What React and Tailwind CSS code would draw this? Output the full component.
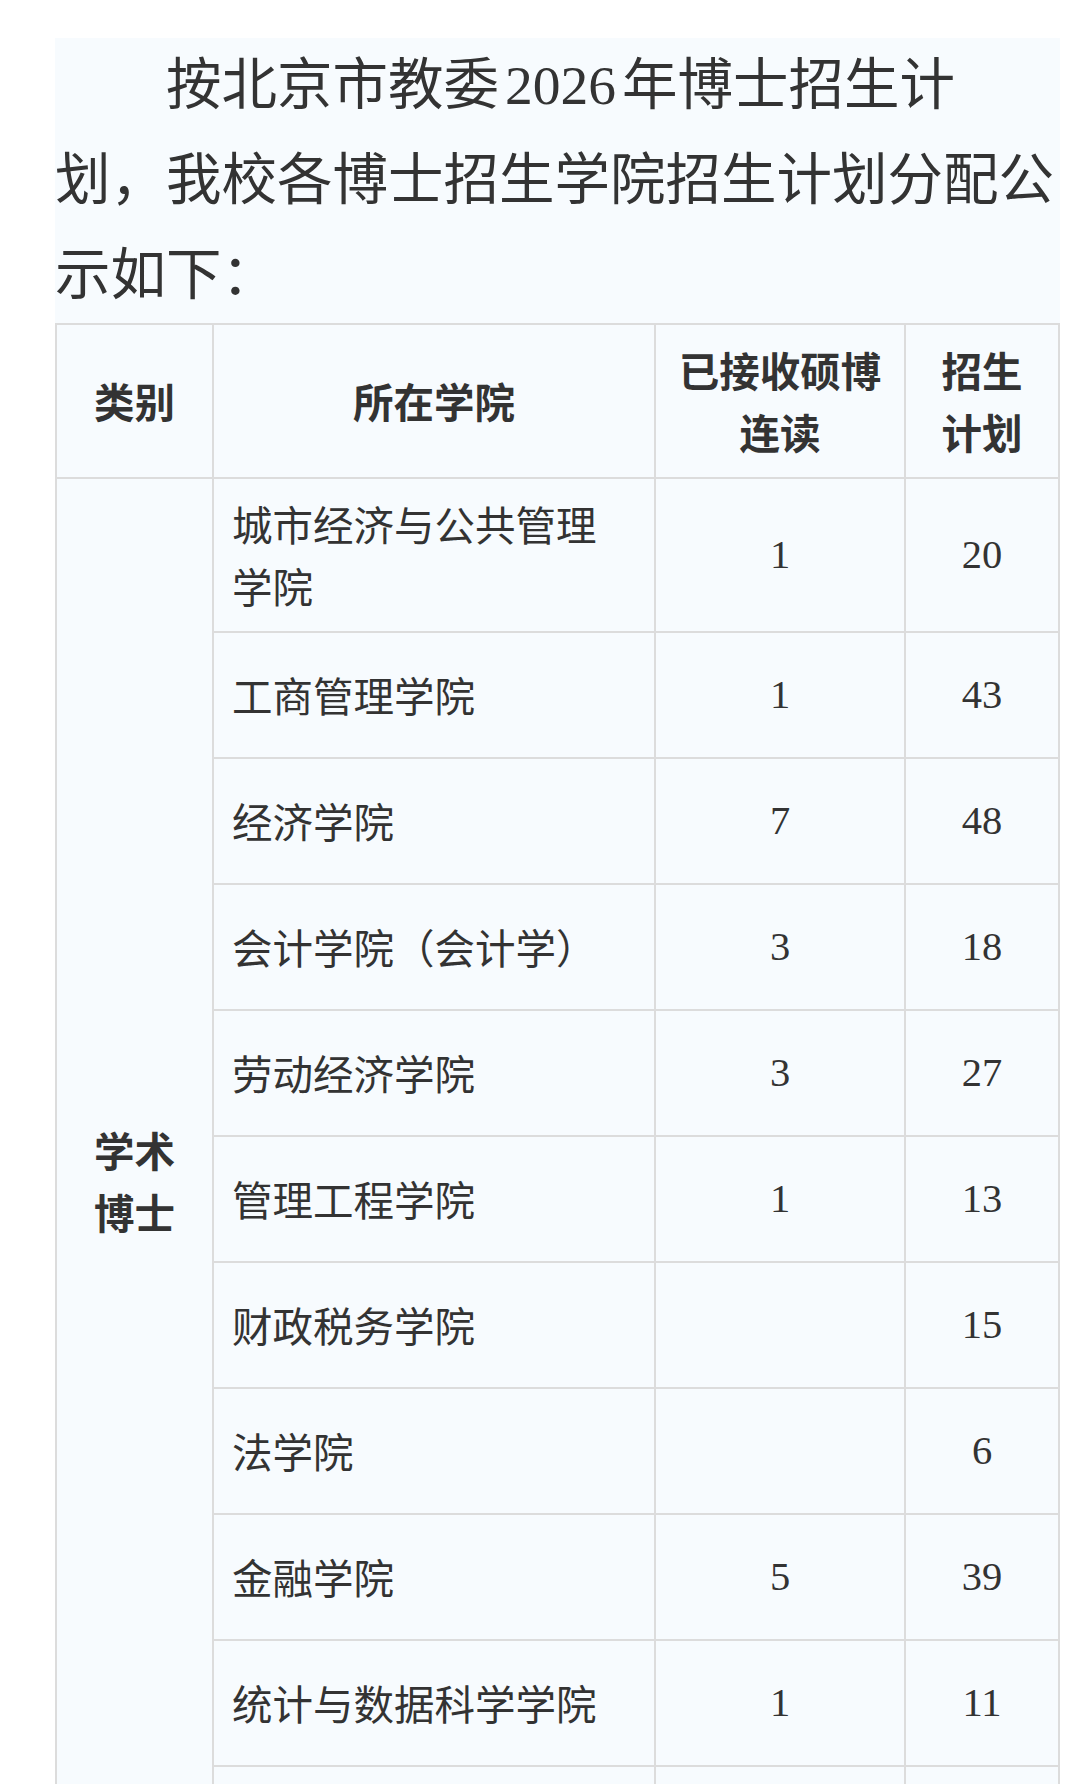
import React from 'react';

const rows = [
  { name: '城市经济与公共管理学院', got: '1', plan: '20', tall: true },
  { name: '工商管理学院', got: '1', plan: '43' },
  { name: '经济学院', got: '7', plan: '48' },
  { name: '会计学院（会计学）', got: '3', plan: '18' },
  { name: '劳动经济学院', got: '3', plan: '27' },
  { name: '管理工程学院', got: '1', plan: '13' },
  { name: '财政税务学院', got: '', plan: '15' },
  { name: '法学院', got: '', plan: '6' },
  { name: '金融学院', got: '5', plan: '39' },
  { name: '统计与数据科学学院', got: '1', plan: '11' },
  { name: '', got: '', plan: '', last: true },
];

const cell = 'border-2 border-[#dcdcdc]';
const serif = { fontFamily: '"Liberation Serif", "Noto Sans CJK SC", serif' };
const sans = { fontFamily: '"Noto Sans CJK SC", sans-serif' };

const App = () => {
  return (
    <div className="bg-white min-h-[1784px] pt-[38px] pl-[55px] pr-[20px] text-[#333]" style={serif}>
      <div className="bg-[#f7fbfe]">
        <p className="text-[55.5px] leading-[95px] indent-[111px] whitespace-nowrap">
          按北京市教委<span className="mx-[6px]">2026</span>年博士招生计<br />
          划，我校各博士招生学院招生计划分配公<br />
          示如下：
        </p>

        <table className="w-full table-fixed border-collapse text-[40.5px] leading-[62px]">
          <colgroup>
            <col className="w-[157px]" />
            <col className="w-[442px]" />
            <col className="w-[250px]" />
            <col />
          </colgroup>
          <thead>
            <tr className="font-bold" style={sans}>
              <th className={`${cell} h-[154px] px-[20px] align-middle`}>类别</th>
              <th className={`${cell} px-[20px] align-middle`}>所在学院</th>
              <th className={`${cell} px-[20px] align-middle`}>已接收硕博连读</th>
              <th className={`${cell} px-[20px] align-middle`}>招生计划</th>
            </tr>
          </thead>
          <tbody>
            {rows.map((r, i) => (
              <tr key={i}>
                {i === 0 && (
                  <td
                    rowSpan={rows.length}
                    className={`${cell} px-[20px] text-center align-middle font-bold`}
                    style={sans}
                  >
                    学术博士
                  </td>
                )}
                <td
                  className={`${cell} pl-[18px] pr-[20px] align-middle ${r.tall ? 'h-[154px]' : r.last ? 'h-[118px]' : 'h-[126px]'}`}
                  style={sans}
                >
                  {r.name}
                </td>
                <td className={`${cell} text-center align-middle`}>{r.got}</td>
                <td className={`${cell} text-center align-middle`}>{r.plan}</td>
              </tr>
            ))}
          </tbody>
        </table>
      </div>
    </div>
  );
};

export default App;
